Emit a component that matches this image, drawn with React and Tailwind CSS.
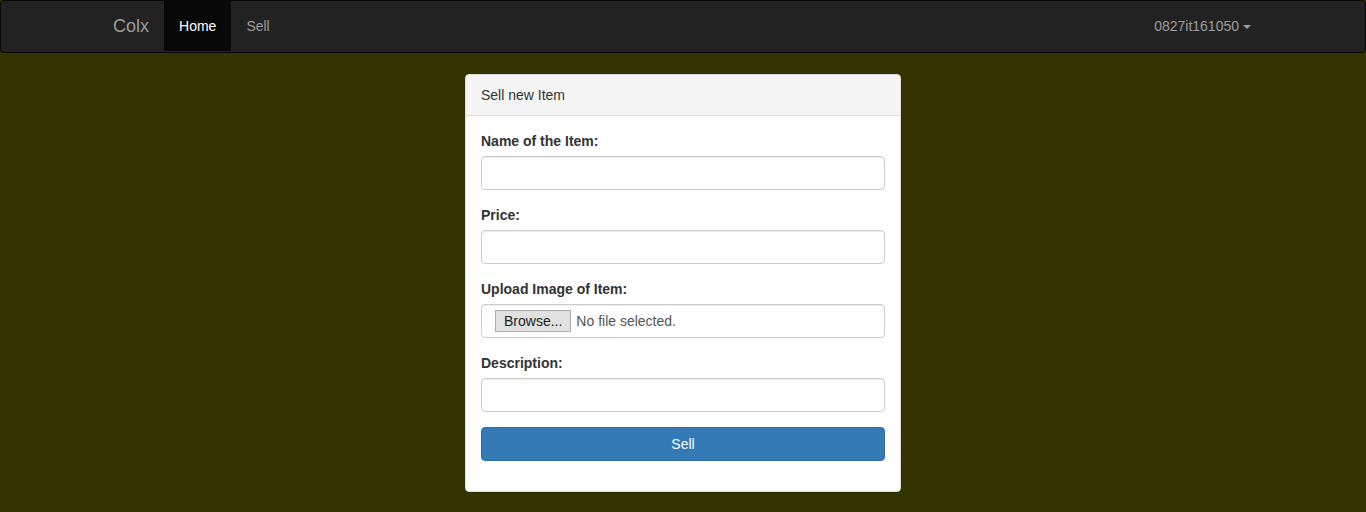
import React from 'react';

const Field = ({ label, children }) => (
  <div className="mb-[15px]">
    <label className="block mb-[5px] font-bold text-[14px] leading-[20px] text-[#333]">{label}</label>
    {children}
  </div>
);

const TextInput = () => (
  <input
    type="text"
    className="block w-full h-[34px] px-3 py-1.5 text-[14px] text-[#555] bg-white border border-[#ccc] rounded-[4px] shadow-[inset_0_1px_1px_rgba(0,0,0,0.075)] outline-none"
  />
);

export default function App() {
  return (
    <div className="min-h-[512px] bg-[#333300] font-['Liberation_Sans',Arial,sans-serif] text-[14px] text-[#333]">
      {/* Navbar */}
      <nav className="h-[53px] bg-[#222] border border-[#080808] rounded-[4px]">
        <div className="w-[1170px] mx-auto px-[15px] flex items-stretch h-[51px]">
          <a className="px-[15px] -ml-[15px] h-[51px] flex items-center text-[18px] text-[#9d9d9d]">Colx</a>
          <ul className="flex h-[50px]">
            <li className="px-[15px] flex items-center bg-[#080808] text-white">Home</li>
            <li className="px-[15px] flex items-center text-[#9d9d9d]">Sell</li>
          </ul>
          <div className="ml-auto -mr-[15px] pr-[17px] flex items-center h-[50px] text-[#9d9d9d]">
            <span>0827it161050</span>
            <span className="ml-[4px] mt-[1px] w-0 h-0 border-x-[4px] border-x-transparent border-t-[4px] border-t-[#9d9d9d]" />
          </div>
        </div>
      </nav>

      {/* Panel */}
      <div className="w-[436px] mx-auto mt-[21px] bg-white border border-[#ddd] rounded-[4px] shadow-[0_1px_1px_rgba(0,0,0,0.05)]">
        <div className="px-[15px] py-[10px] h-[41px] bg-[#f5f5f5] border-b border-[#ddd] rounded-t-[3px] leading-[20px]">
          Sell new Item
        </div>
        <div className="p-[15px]">
          <Field label="Name of the Item:">
            <TextInput />
          </Field>
          <Field label="Price:">
            <TextInput />
          </Field>
          <Field label="Upload Image of Item:">
            <div className="flex items-center w-full h-[34px] px-[13px] bg-white border border-[#ccc] rounded-[4px] shadow-[inset_0_1px_1px_rgba(0,0,0,0.075)]">
              <button className="h-[22px] px-[8px] bg-[#e1e1e1] border border-[#adadad] text-[14px] text-[#222] leading-[18px]">Browse...</button>
              <span className="ml-[5px] text-[#555]">No file selected.</span>
            </div>
          </Field>
          <Field label="Description:">
            <TextInput />
          </Field>
          <div className="mb-[15px]">
            <button className="block w-full h-[34px] bg-[#337ab7] border border-[#2e6da4] rounded-[4px] text-white text-[14px]">Sell</button>
          </div>
        </div>
      </div>
    </div>
  );
}
